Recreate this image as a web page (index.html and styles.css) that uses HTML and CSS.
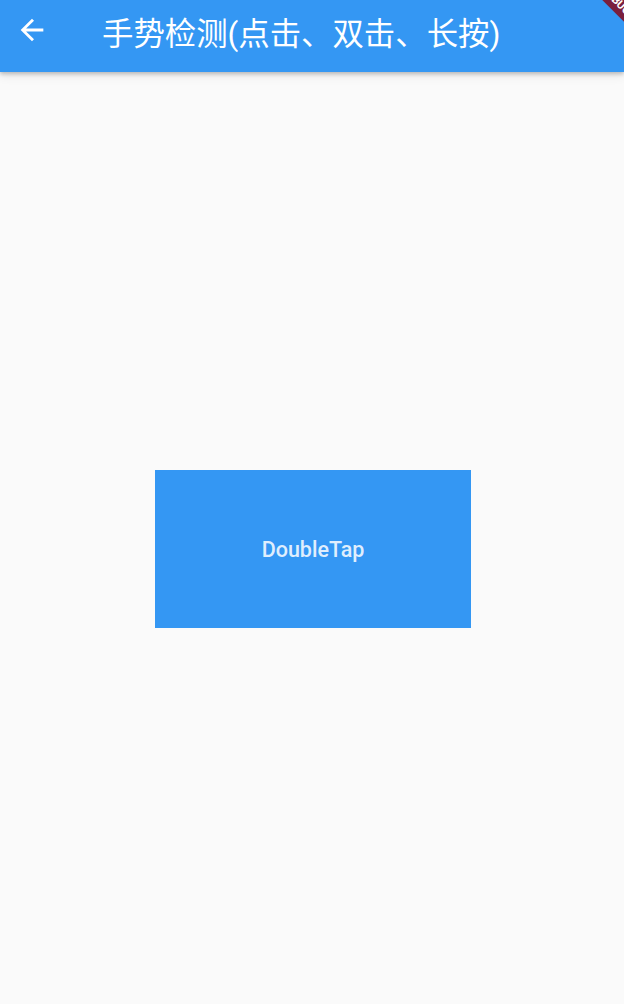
FILE: index.html
```html
<!DOCTYPE html>
<html>
<head>
<meta charset="utf-8">
<link rel="stylesheet" href="styles.css">
</head>
<body>
<div class="app">
  <header class="appbar">
    <div class="back">
      <svg viewBox="0 0 24 24" width="34" height="34"><path fill="#fff" d="M20 11H7.83l5.59-5.59L12 4l-8 8 8 8 1.41-1.41L7.83 13H20v-2z"/></svg>
    </div>
    <h1 class="title">手势检测(点击、双击、长按)</h1>
  </header>
  <main class="content">
    <div class="box"><span class="label">DoubleTap</span></div>
  </main>
  <div class="debug">DEBUG</div>
</div>
</body>
</html>
```
FILE: styles.css
```css
html, body {
  margin: 0;
  padding: 0;
  background: #fafafa;
}
.app {
  position: relative;
  width: 624px;
  height: 1004px;
  overflow: hidden;
  display: flex;
  flex-direction: column;
  font-family: Roboto, "Noto Sans CJK SC", sans-serif;
}
.appbar {
  height: 72px;
  flex: none;
  background: #3497f3;
  display: flex;
  align-items: center;
  box-shadow: 0 2px 4px rgba(0,0,0,0.22), 0 4px 10px rgba(0,0,0,0.08);
  position: relative;
  z-index: 1;
}
.back {
  width: 34px;
  height: 34px;
  margin-left: 15px;
  margin-top: -13px;
  display: flex;
}
.title {
  margin: 0 0 0 53px;
  margin-top: -10px;
  color: #fff;
  font-size: 31.4px;
  font-weight: 400;
  font-family: Roboto, "Noto Sans CJK SC", sans-serif;
  letter-spacing: 0;
  white-space: nowrap;
}
.content {
  flex: 1;
  display: flex;
  align-items: flex-start;
  justify-content: center;
  padding-top: 398px;
}
.box {
  width: 316px;
  height: 158px;
  margin-left: 2px;
  background: #3497f3;
  display: flex;
  align-items: center;
  justify-content: center;
}
.label {
  color: rgba(255,255,255,0.86);
  font-size: 21.5px;
  font-weight: 500;
  margin-top: 1px;
}
.debug {
  position: absolute;
  top: -8px;
  right: -62px;
  width: 140px;
  height: 18px;
  background: #7a1f3d;
  color: #fff;
  font-size: 11px;
  font-weight: bold;
  text-align: center;
  line-height: 18px;
  transform: rotate(45deg);
  transform-origin: center;
  z-index: 2;
}
```
